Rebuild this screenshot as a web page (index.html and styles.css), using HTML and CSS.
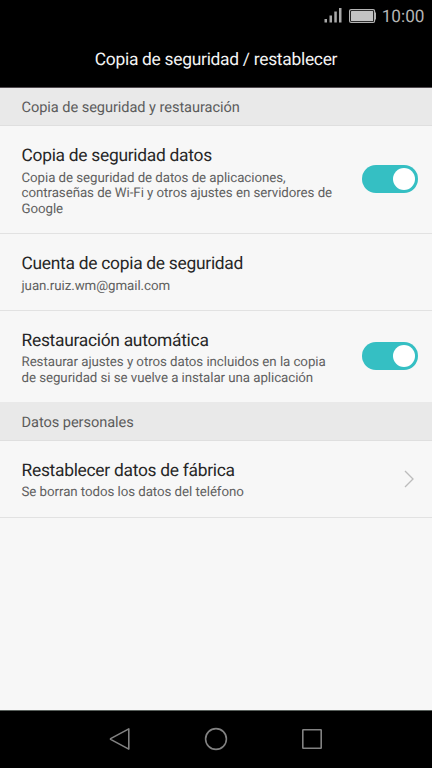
FILE: index.html
```html
<!DOCTYPE html>
<html lang="es">
<head>
    <meta charset="UTF-8">
    <meta name="viewport" content="width=device-width, initial-scale=1.0">
    <title>Copia de seguridad / restablecer</title>
    <link rel="stylesheet" href="styles.css">
</head>
<body>
    <div class="phone">
        <div class="status">
            <svg class="signal" width="18" height="16" viewBox="0 0 18 16">
                <path d="M0.5 12h2.5v3.5h-2.5z M5.5 8.5h2.5v7h-2.5z M10.3 4.5h2.5v11h-2.5z M15 1h2.5v14.5h-2.5z" fill="#a8a8a8"/>
            </svg>
            <svg class="battery" width="28" height="14" viewBox="0 0 28 14">
                <rect x="0.6" y="0.6" width="25" height="12.8" rx="1.5" fill="none" stroke="#b4b4b4" stroke-width="1.2"/>
                <rect x="2" y="2" width="22.2" height="10" rx="0.5" fill="#c3c3c3"/>
                <path d="M26 3.5h1v7h-1z" fill="#b4b4b4"/>
            </svg>
            <span class="clock">10:00</span>
        </div>
        <header class="header">
            <h1>Copia de seguridad / restablecer</h1>
        </header>

        <main class="content">
            <h2 class="section">Copia de seguridad y restauración</h2>
            <div class="row">
                <div class="text">
                    <div class="title">Copia de seguridad datos</div>
                    <div class="desc">Copia de seguridad de datos de aplicaciones,<br>contraseñas de Wi-Fi y otros ajustes en servidores de<br>Google</div>
                </div>
                <div class="switch"><div class="knob"></div></div>
            </div>
            <div class="row">
                <div class="text">
                    <div class="title">Cuenta de copia de seguridad</div>
                    <div class="desc">juan.ruiz.wm@gmail.com</div>
                </div>
            </div>
            <div class="row last">
                <div class="text">
                    <div class="title">Restauración automática</div>
                    <div class="desc">Restaurar ajustes y otros datos incluidos en la copia<br>de seguridad si se vuelve a instalar una aplicación</div>
                </div>
                <div class="switch"><div class="knob"></div></div>
            </div>
            <h2 class="section personal">Datos personales</h2>
            <div class="row">
                <div class="text">
                    <div class="title">Restablecer datos de fábrica</div>
                    <div class="desc">Se borran todos los datos del teléfono</div>
                </div>
                <svg class="arrow" width="11" height="18" viewBox="0 0 11 18">
                    <path d="M1 1l8 8l-8 8" fill="none" stroke="#bcbcbc" stroke-width="1.3"/>
                </svg>
            </div>
        </main>

        <nav class="navbar">
            <svg width="24" height="24" viewBox="0 0 24 24">
                <path d="M20.8 1.9v20.2L2.6 12.4v-.8z" stroke-linejoin="round"/>
            </svg>
            <svg width="24" height="24" viewBox="0 0 24 24">
                <circle cx="12" cy="12" r="10.4"/>
            </svg>
            <svg width="24" height="24" viewBox="0 0 24 24">
                <rect x="2.8" y="2.8" width="18.4" height="18.4" rx="0.4"/>
            </svg>
        </nav>
    </div>
</body>
</html>
```

FILE: styles.css
```css
body {
    margin: 0;
    font-family: Roboto, "Liberation Sans", sans-serif;
    text-rendering: geometricPrecision;
}

.phone {
    display: flex;
    flex-direction: column;
    width: 432px; height: 768px;
    background-color: #f7f7f7;
    overflow: hidden;
}

/* status bar */
.status {
    display: flex;
    justify-content: flex-end;
    align-items: center;
    height: 32px;
    padding-right: 7.5px;
    background-color: #000;
}

.signal {
    margin: 0 7px 2px 0;
}

.battery {
    margin-right: 4.5px;
}

.clock {
    padding-top: 2px;
    color: #b4b4b4;
    font-size: 17.2px;
    line-height: 32px;
}

/* title bar */
.header {
    box-sizing: border-box;
    height: 56px;
    background-color: #000;
    border-bottom: 1px solid #514b50;
    text-align: center;
}

.header h1 {
    margin: 0;
    color: #f4f4f4;
    font-size: 17.4px;
    font-weight: 400;
    line-height: 56px;
    letter-spacing: -0.28px;
}

/* list */
.content {
    flex: 1;
}

.section {
    margin: 0;
    height: 37px;
    padding-left: 21.5px;
    background-color: #e9e9e9;
    border-bottom: 1px solid #dfdfdf;
    color: #5c5c5c;
    font-size: 14.6px;
    font-weight: 400;
    line-height: 38px;
    letter-spacing: -0.06px;
}

.section.personal {
    height: 38px;
    line-height: 40px;
}

.row {
    display: flex;
    justify-content: space-between;
    align-items: center;
    padding: 20px 14px 16px 21.5px;
    border-bottom: 1px solid #e2e2e2;
}

.row.last {
    border-bottom: 0;
    padding: 19.5px 14px 15.5px 21.5px;
}

.title {
    margin-bottom: 3.5px;
    color: #262626;
    font-size: 17.4px;
    line-height: 21px;
    letter-spacing: -0.28px;
}

.desc {
    color: #606060;
    font-size: 13.3px;
    line-height: 15.5px;
    letter-spacing: -0.06px;
    white-space: nowrap;
}

/* toggle */
.switch {
    display: flex;
    justify-content: flex-end;
    align-items: center;
    box-sizing: border-box;
    width: 56px; height: 28px;
    margin-bottom: 5px;
    padding-right: 3px;
    border-radius: 14px;
    background-color: #35bfc3;
}

.knob {
    width: 22px; height: 22px;
    border-radius: 50%;
    background-color: #fff;
}

.arrow {
    margin: 0 3px 3px 0;
}

/* navigation buttons */
.navbar {
    display: flex;
    justify-content: center;
    align-items: center;
    gap: 72px;
    height: 57px;
    border-top: 1px solid #59605c;
    background-color: #000;
}

.navbar svg {
    margin-bottom: 1px;
    fill: none;
    stroke: #828282;
    stroke-width: 1.6;
}
```
